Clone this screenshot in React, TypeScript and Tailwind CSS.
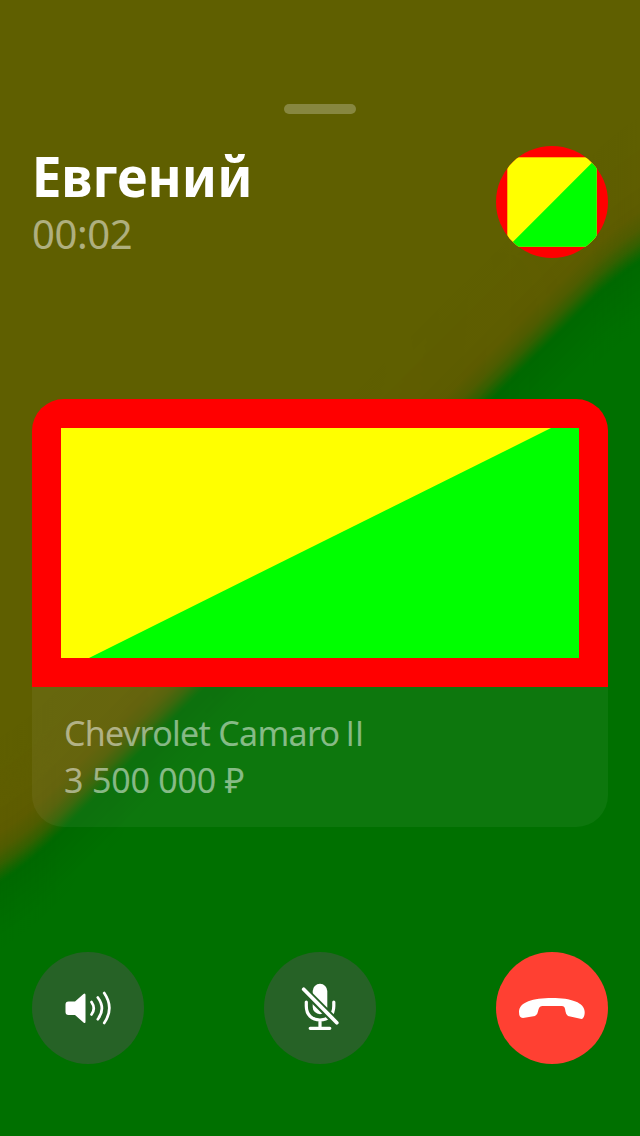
import React from "react";

const mix = (a: number[], b: number[], t: number) =>
  `rgb(${a.map((v, i) => Math.round(v + (b[i] - v) * t)).join(",")})`;

const stops: [number, number[]][] = [
  [-140, [95, 95, 0]],
  [-80, [95, 94, 0]],
  [-48, [93, 92, 0]],
  [-30, [80, 92, 0]],
  [-15, [52, 96, 0]],
  [-5, [22, 101, 0]],
  [3, [0, 105, 0]],
  [20, [0, 107, 0]],
  [60, [0, 112, 0]],
];

function colorAt(d: number) {
  for (let i = 1; i < stops.length; i++) {
    if (d <= stops[i][0]) {
      const [p, a] = stops[i - 1];
      const [q, b] = stops[i];
      return mix(a, b, (d - p) / (q - p));
    }
  }
  return "rgb(0,112,0)";
}

const bands = Array.from({ length: 106 }, (_, i) => -140 + i * 2);

function Backdrop() {
  return (
    <svg className="absolute inset-0 h-full w-full" viewBox="0 0 640 1136" aria-hidden="true">
      <rect width="640" height="1136" fill="rgb(95,95,0)" />
      {bands.map((d) => (
        <path
          key={d}
          transform={`translate(0 ${d})`}
          d="M-10 884 Q26 864 60 829 L590 298 Q618 270 650 251 V1400 H-10Z"
          fill={colorAt(d)}
        />
      ))}
    </svg>
  );
}

function SpeakerIcon() {
  return (
    <svg className="h-28 w-28" viewBox="0 0 112 112" fill="none">
      <path d="M36.5 49.5H43L51.5 42Q53.5 40.500 53.500 43V69.500Q53.500 72 51.500 70.500L43 63H36.500Q33.500 63 33.500 60V52.500Q33.500 49.500 36.500 49.500Z" fill="white" />
      <path d="M59.500 50Q64 56.500 59.500 62.500M65.800 45.500Q74 56.500 65.800 67.200M72.200 41Q82.500 56 72.200 71" stroke="white" strokeWidth="2.700" strokeLinecap="round" />
    </svg>
  );
}

function MutedIcon() {
  return (
    <svg className="h-28 w-28" viewBox="0 0 112 112" fill="none">
      <rect x="48.700" y="31.800" width="14.600" height="30.400" rx="7.300" fill="white" />
      <path d="M42.300 50V54C42.300 63 48 68 56 68S69.800 63 69.800 54V50M56 68V76M46.200 76.300H65.800" stroke="white" strokeWidth="3.200" strokeLinecap="round" />
      <path d="M41 39L73.500 71.500" stroke="#266226" strokeWidth="7.800" />
      <path d="M39.700 37.300L72.800 70.700" stroke="white" strokeWidth="3.700" strokeLinecap="round" />
    </svg>
  );
}

function HangUpIcon() {
  return (
    <svg className="h-28 w-28" viewBox="0 0 112 112" fill="white">
      <path d="M23 60C23 50 37 46 56 46S88.700 50.500 88.700 60C88.700 64 87.500 66.500 85.500 67L72 64Q70 63 69.500 59.500C69 55 68 54 65 54H47.500C44 54 43 55 42 59.500Q41.500 63 39 64L27 66Q23 66 23 60Z" />
    </svg>
  );
}

export default function App() {
  return (
    <main className="relative h-[1136px] w-[640px] overflow-hidden font-['Noto_Sans',sans-serif]">
      <Backdrop />
      <div className="relative flex h-full flex-col px-8 pt-[104px]">
        <div className="h-2.5 w-[72px] self-center rounded-full bg-white/25" />
        <header className="mt-8 flex h-28 justify-between">
          <div className="whitespace-nowrap">
            <h1 className="w-fit origin-left scale-x-[0.935] text-[56px] leading-[58px] font-bold text-white">Евгений</h1>
            <p className="mt-0.5 text-[40px] leading-[56px] tracking-[-0.4px] text-white/50">00:02</p>
          </div>
          <svg className="h-28 w-28 overflow-hidden rounded-full" viewBox="0 0 112 112">
            <rect width="112" height="112" fill="#f00" />
            <rect x="11.300" y="11.300" width="89.400" height="89.400" fill="#ff0" />
            <path d="M100.700 12V100.700H12Z" fill="#0f0" />
          </svg>
        </header>
        <section className="mt-[141px] h-[428px] overflow-hidden rounded-[32px]">
          <svg className="block h-72 w-full" viewBox="0 0 576 288">
            <rect width="576" height="288" fill="#f00" />
            <rect x="29" y="29" width="518" height="230" fill="#ff0" />
            <path d="M519 29H547V259H57Z" fill="#0f0" />
          </svg>
          <div className="h-[140px] bg-white/5 px-8 pt-[23px] text-[34px] leading-[47px] whitespace-nowrap text-white/50">
            <p className="tracking-[-0.7px]">
              Chevrolet Camaro <span className="-ml-0.5 font-['Open_Sans',sans-serif] tracking-[-0.2px]">II</span>
            </p>
            <p className="tracking-[-0.2px]">3 500 000 ₽</p>
          </div>
        </section>
        <div className="mt-[125px] flex justify-between">
          <button className="size-28 rounded-full bg-[#266226]" aria-label="Динамик"><SpeakerIcon /></button>
          <button className="size-28 rounded-full bg-[#266226]" aria-label="Микрофон"><MutedIcon /></button>
          <button className="size-28 rounded-full bg-[#ff4032]" aria-label="Завершить"><HangUpIcon /></button>
        </div>
      </div>
    </main>
  );
}
